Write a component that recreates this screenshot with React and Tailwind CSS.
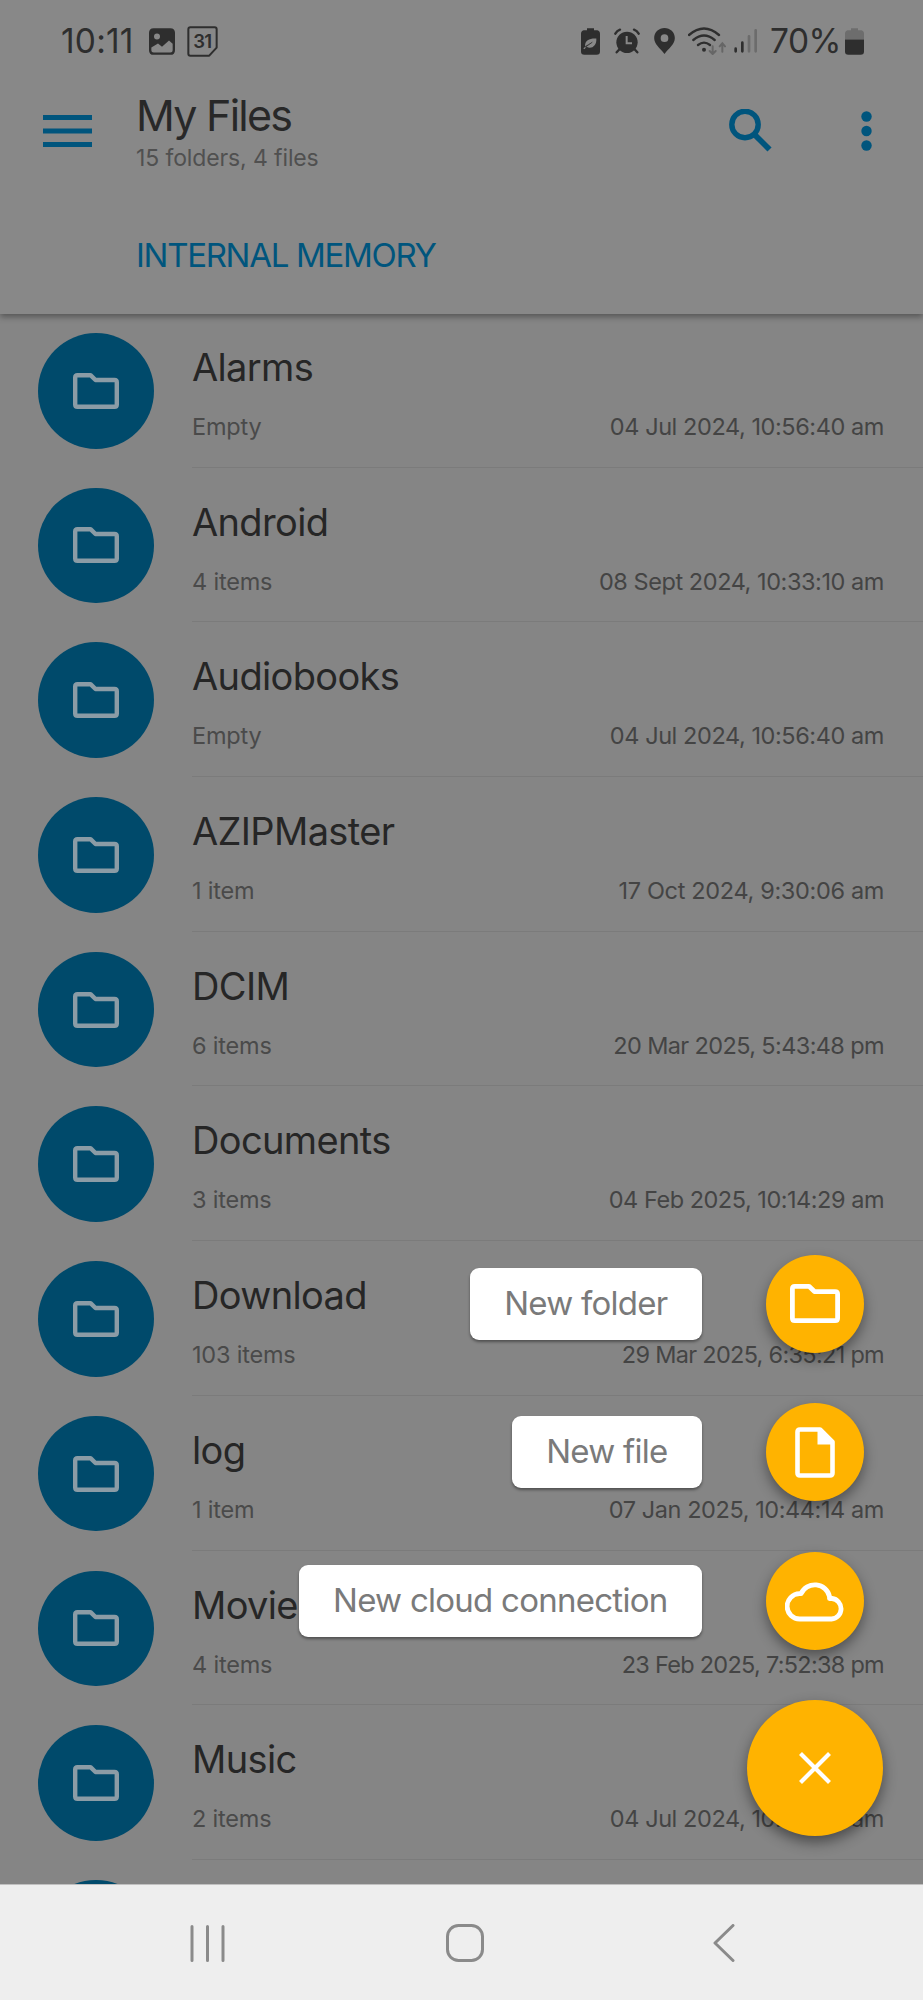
import React from "react";

const files = [
  { name: "Alarms", info: "Empty", date: "04 Jul 2024, 10:56:40 am", spacing: "tracking-[-0.420px]" },
  { name: "Android", info: "4 items", date: "08 Sept 2024, 10:33:10 am", spacing: "tracking-[-0.440px]" },
  { name: "Audiobooks", info: "Empty", date: "04 Jul 2024, 10:56:40 am", spacing: "tracking-[-0.420px]" },
  { name: "AZIPMaster", info: "1 item", date: "17 Oct 2024, 9:30:06 am", spacing: "tracking-[-0.340px]" },
  { name: "DCIM", info: "6 items", date: "20 Mar 2025, 5:43:48 pm", spacing: "tracking-[-0.620px]" },
  { name: "Documents", info: "3 items", date: "04 Feb 2025, 10:14:29 am", spacing: "tracking-[-0.480px]" },
  { name: "Download", info: "103 items", date: "29 Mar 2025, 6:35:21 pm", spacing: "tracking-[-0.700px]" },
  { name: "log", info: "1 item", date: "07 Jan 2025, 10:44:14 am", spacing: "tracking-[-0.420px]" },
  { name: "Movies", info: "4 items", date: "23 Feb 2025, 7:52:38 pm", spacing: "tracking-[-0.720px]" },
  { name: "Music", info: "2 items", date: "04 Jul 2024, 10:56:40 am", spacing: "tracking-[-0.420px]" },
  { name: "", info: "", date: "", spacing: "" },
];

function FolderIcon({ className }) {
  return (
    <svg viewBox="0 0 46 36" fill="none" stroke="currentColor" strokeWidth="4.4" strokeLinejoin="round" className={className}>
      <path d="M4.5 2.2H17.5L22.5 7H41.500Q43.800 7 43.800 9.300V31.500Q43.800 33.800 41.500 33.800H4.500Q2.200 33.800 2.200 31.500V4.500Q2.200 2.200 4.500 2.200Z" />
    </svg>
  );
}

function StatusBar() {
  return (
    <div className="flex h-[82px] items-center pl-[61px] text-[#2e2e2e]">
      <span className="w-[88px] text-[33.5px] leading-[40px] tracking-[0.200px]">10:11</span>
      <svg viewBox="0 0 78 80" className="h-[27px] w-[26px] shrink-0">
        <path fill="currentColor" fillRule="evenodd" d="M14 0H64Q78 0 78 14V66Q78 80 64 80H14Q0 80 0 66V14Q0 0 14 0ZM24 16A9 9 0 1 0 24 34A9 9 0 1 0 24 16ZM7 58V66Q7 73 14 73H64Q71 73 71 66V47L60 37L39 56L27 46Z" />
      </svg>
      <svg viewBox="0 0 92 92" className="ml-[12px] h-[31px] w-[31px] shrink-0">
        <path fill="none" stroke="currentColor" strokeWidth="6" strokeLinejoin="round" d="M9 4H82Q88 4 88 10V64L66 88H10Q4 88 4 82V10Q4 4 10 4Z" />
        <text x="45" y="65" textAnchor="middle" fill="currentColor" fontFamily="Inter, sans-serif" fontWeight="600" fontSize="55" letterSpacing="-3">31</text>
      </svg>
      <svg viewBox="0 0 57 80" className="ml-[363px] h-[27px] w-[19px] shrink-0">
        <path fill="currentColor" d="M18 0H39V6H49Q57 8 57 17V70Q57 80 47 80H10Q0 80 0 70V17Q0 8 8 6H18Z" />
        <path fill="#888" d="M12 54C12 35 26 30 46 31C48 54 30 64 17 56L10 63L7 60L30 44Z" />
        <path stroke="#2b2b2b" strokeWidth="2.500" d="M13 57L34 42" />
      </svg>
      <svg viewBox="0 0 78 78" className="ml-[14px] h-[26px] w-[26px] shrink-0">
        <circle cx="39" cy="43" r="32" fill="currentColor" />
        <path fill="none" stroke="currentColor" strokeWidth="7" strokeLinecap="round" d="M4 17Q9 8 18 5M74 17Q69 8 60 5M15 65L8 73M63 65L70 73" />
        <path fill="none" stroke="#888" strokeWidth="6" d="M38 24V46H54" />
      </svg>
      <svg viewBox="0 0 62 78" className="ml-[14px] h-[26px] w-[21px] shrink-0">
        <path fill="currentColor" fillRule="evenodd" d="M31 0C48 0 62 13 62 30C62 49 45 60 31 78C17 60 0 49 0 30C0 13 14 0 31 0ZM31 19A11.500 11.500 0 1 0 31 42A11.500 11.500 0 1 0 31 19Z" />
      </svg>
      <svg viewBox="0 0 114 84" className="ml-[13px] h-[28px] w-[38px] shrink-0" fill="none" strokeLinecap="round">
        <path stroke="currentColor" strokeWidth="7" d="M3 24Q48 -15 93 24M16 39Q48 12 80 39M30 54Q48 40 66 54" />
        <circle cx="48" cy="68" r="6" fill="currentColor" />
        <path stroke="#666" strokeWidth="6" d="M74 58V80M65 72L74 81L83 72M103 74V49M95 58L103 49L111 58" />
      </svg>
      <svg viewBox="0 0 72 78" className="ml-[8px] h-[26px] w-[24px] shrink-0" strokeWidth="8" strokeLinecap="round">
        <path stroke="currentColor" d="M5 62V70M25 44V70" />
        <path stroke="#6c6c6c" d="M45 25V70M65 7V70" />
      </svg>
      <span className="ml-[12px] w-[75px] text-[33.5px] leading-[40px] tracking-[-0.500px]">70%</span>
      <svg viewBox="0 0 57 80" className="h-[27px] w-[19px] shrink-0">
        <path fill="#6d6d6d" d="M18 0H39V6H49Q57 8 57 17V34H0V17Q0 8 8 6H18Z" />
        <path fill="currentColor" d="M0 34H57V70Q57 80 47 80H10Q0 80 0 70Z" />
      </svg>
    </div>
  );
}

function Header() {
  return (
    <header className="relative z-10 h-[314px] shrink-0 bg-[#888888] shadow-[0_3px_6px_rgba(0,0,0,0.350)]">
      <StatusBar />
      <div className="flex h-[98px] text-[#00557d]">
        <svg viewBox="0 0 49 32" className="mt-[33px] ml-[43px] h-[32px] w-[49px] shrink-0" fill="currentColor">
          <path d="M0 0H49V5H0ZM0 13.500H49V18.500H0ZM0 27H49V32H0Z" />
        </svg>
        <div className="ml-[44px] flex flex-1 flex-col pt-[8px]">
          <h1 className="text-[43px] leading-[50px] tracking-[-1.750px] text-[#282828]">My Files</h1>
          <p className="mt-[4px] text-[23px] leading-[28px] tracking-[-0.120px] text-[#505050]">15 folders, 4 files</p>
        </div>
        <svg viewBox="0 0 43 43" className="mt-[27px] mr-[89px] h-[43px] w-[43px] shrink-0" fill="none" stroke="currentColor">
          <circle cx="16" cy="15.500" r="13.200" strokeWidth="5.400" />
          <path strokeWidth="5.800" d="M25.500 25.500L40.500 40.500" />
        </svg>
        <svg viewBox="0 0 11 40" className="mt-[29px] mr-[51px] h-[40px] w-[11px] shrink-0" fill="currentColor">
          <circle cx="5.500" cy="5.500" r="5.200" />
          <circle cx="5.500" cy="20" r="5.200" />
          <circle cx="5.500" cy="34.500" r="5.200" />
        </svg>
      </div>
      <div className="flex h-[134px] pt-[55px] pl-[136px]">
        <span className="text-[33px] leading-[40px] tracking-[-1.300px] text-[#00557d]">INTERNAL MEMORY</span>
      </div>
    </header>
  );
}

function FileRow({ file }) {
  return (
    <div className="flex h-[154.700px] shrink-0 pl-[38px]">
      <div className="mt-[20px] mr-[38.500px] flex h-[115.500px] w-[115.500px] shrink-0 items-center justify-center rounded-full bg-[#004a6b] text-[#8b9ca6]">
        <FolderIcon className="h-[36px] w-[46px]" />
      </div>
      <div className="flex flex-1 flex-col border-b-[1.500px] border-[#7b7b7b] pt-[32px] pr-[39px]">
        <span className="text-[38px] leading-[44px] tracking-[-0.650px] text-[#262626]">{file.name}</span>
        <div className="mt-[24px] flex justify-between text-[23.500px] leading-[28px] text-[#4a4a4a]">
          <span className="tracking-[-0.200px]">{file.info}</span>
          <span className={file.spacing + " text-[#444444]"}>{file.date}</span>
        </div>
      </div>
    </div>
  );
}

function Action({ label, children }) {
  return (
    <div className="flex h-[99px] items-center justify-end">
      <span className="flex h-[72px] items-center rounded-[9px] bg-white px-[34px] text-[33px] tracking-[-0.740px] whitespace-nowrap text-[#7a7a7a] shadow-[0_2px_3px_rgba(0,0,0,0.400)]">
        {label}
      </span>
      <button className="ml-[64px] flex h-[98px] w-[98px] items-center justify-center rounded-full bg-[#ffb300] text-white shadow-[0_6px_13px_rgba(0,0,0,0.400)]">
        {children}
      </button>
    </div>
  );
}

function ActionMenu() {
  return (
    <div className="absolute top-[1254px] right-[59.500px] z-20 flex flex-col gap-[49.500px]">
      <Action label="New folder">
        <FolderIcon className="h-[41px] w-[50px]" />
      </Action>
      <Action label="New file">
        <svg viewBox="0 0 40 51" className="h-[51px] w-[40px]">
          <path fill="none" stroke="currentColor" strokeWidth="4.600" strokeLinejoin="round" d="M5 2.500H25L37.500 15V46Q37.500 48.500 35 48.500H5Q2.500 48.500 2.500 46V5Q2.500 2.500 5 2.500Z" />
          <path fill="currentColor" d="M22.500 3H26L38 15V17.500H22.500Z" />
        </svg>
      </Action>
      <Action label="New cloud connection">
        <svg viewBox="0 0 60 42" className="h-[42px] w-[60px]" fill="none" stroke="currentColor" strokeWidth="4.800" strokeLinejoin="round">
          <path d="M15 39H46.500A10.300 10.300 0 0 0 47 18.500H44.500V16.500A15 14.500 0 0 0 16 13.700H14.500A12.600 12.600 0 0 0 15 39Z" />
        </svg>
      </Action>
      <button className="mr-[-19px] flex h-[136px] w-[136px] items-center justify-center self-end rounded-full bg-[#ffb300] text-white shadow-[0_6px_14px_rgba(0,0,0,0.450)]">
        <svg viewBox="0 0 32 32" className="h-[32px] w-[32px]" stroke="currentColor" strokeWidth="4.200">
          <path d="M1.500 1.500L30.500 30.500M30.500 1.500L1.500 30.500" />
        </svg>
      </button>
    </div>
  );
}

function NavBar() {
  return (
    <nav className="relative z-30 flex h-[116px] shrink-0 items-center border-t border-[#c0c0c0] bg-[#eeeeee] pt-px pl-[190px] text-[#8a8a8a]">
      <svg viewBox="0 0 35 37" className="h-[37px] w-[35px]" stroke="currentColor" strokeWidth="3" strokeLinecap="round">
        <path d="M2 1.500V35.500M17.500 1.500V35.500M33 1.500V35.500" />
      </svg>
      <svg viewBox="0 0 38 38" className="ml-[221px] h-[38px] w-[38px]" fill="none" stroke="currentColor" strokeWidth="3">
        <rect x="1.500" y="1.500" width="35" height="35" rx="11" />
      </svg>
      <svg viewBox="0 0 22 38" className="ml-[229px] h-[38px] w-[22px]" fill="none" stroke="currentColor" strokeWidth="3" strokeLinecap="round" strokeLinejoin="round">
        <path d="M20 1.500L2 19L20 36.500" />
      </svg>
    </nav>
  );
}

export default function App() {
  return (
    <div className="relative flex h-[2000px] w-[923px] flex-col overflow-hidden bg-[#858585] font-['Inter',sans-serif]">
      <Header />
      <main className="-mt-px flex min-h-0 flex-1 flex-col overflow-hidden">
        {files.map((file, i) => (
          <FileRow key={i} file={file} />
        ))}
      </main>
      <ActionMenu />
      <NavBar />
    </div>
  );
}
